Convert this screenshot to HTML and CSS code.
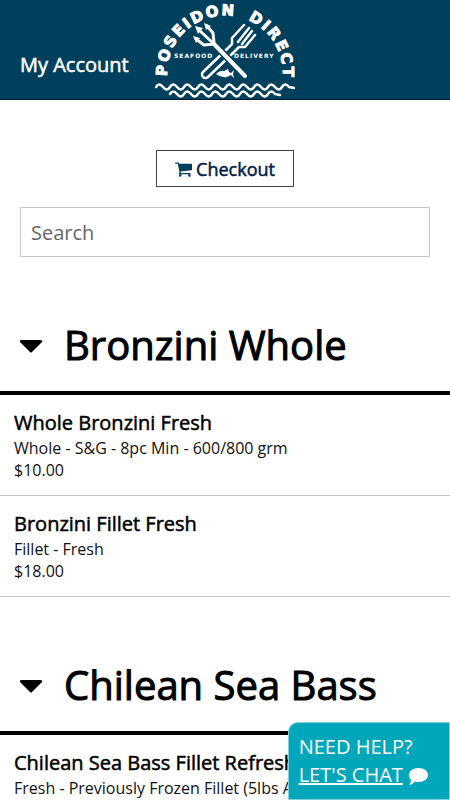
FILE: index.html
```html
<!DOCTYPE html>
<html lang="en">
<head>
  <meta charset="UTF-8" />
  <meta name="viewport" content="width=device-width, initial-scale=1" />
  <title>Poseidon Direct Seafood Delivery</title>
  <link rel="stylesheet" href="styles.css">
</head>
<body>
  <header class="header">
    <a class="account-link" href="#">My Account</a>
    <a class="logo" href="#" aria-label="Poseidon Direct home">
      <svg viewBox="155 0 140 99" width="140" height="99">
        <defs>
          <path id="arc-left" d="M167 76 V74 A58 58 0 0 1 242 18" />
          <path id="arc-right" d="M248 20 A58 58 0 0 1 283 74 V84" />
        </defs>
        <text class="logo-name"><textPath href="#arc-left">POSEIDON</textPath></text>
        <text class="logo-name"><textPath href="#arc-right">DIRECT</textPath></text>
        <text class="logo-tag" x="174" y="58">SEAFOOD</text>
        <text class="logo-tag" x="234" y="58">DELIVERY</text>
        <!-- fork -->
        <g class="logo-line">
          <path d="M226 50 L203 72 A3 3 0 0 0 208 77 L233 53" />
          <path d="M226 50 L232 44 V38 L244 25 M238 42 L249 28 M242 44 L252 31 M233 53 L239 47 H245 L255 35" />
        </g>
        <!-- trident -->
        <path class="logo-cut" d="M216 46 L246 77" />
        <path class="logo-shaft" d="M214 44 L245 76" />
        <path class="logo-prong" d="M199 30 L214 44 M207 26 L213 33 L214 43 M196 39 L204 45 L214 44" />
        <path class="logo-fill" d="M195 26 L203 28 L198 34 Z M204 23 L211 26 L206 30 Z M193 36 L200 38 L196 43 Z" />
        <!-- fish -->
        <path class="logo-fill" d="M216 74 Q220 70 224 71 L228 69 L229 72 L231 73 L234 70 L233 74 L234 78 L231 75 L227 77 Q221 78 216 74 Z" />
        <path class="logo-wave" d="M156 87 q3 -5 7 0 t7 0 t7 0 t7 0 t7 0 t7 0 t7 0 t7 0 t7 0 t7 0 t7 0 t7 0 t7 0 t7 0 t7 0 t7 0 t7 0 t7 0 t7 0 l5 1" />
        <path class="logo-wave" d="M170 94 q3 -5 7 0 t7 0 t7 0 t7 0 t7 0 t7 0 t7 0 t7 0 t7 0 t7 0 t7 0 t7 0 t7 0 t7 0 t7 0 l5 1" />
      </svg>
    </a>
  </header>

  <main>
    <div class="toolbar">
      <button class="checkout" type="button">
        <svg class="cart" viewBox="0 0 1664 1536" width="17" height="16">
          <path d="M640 1408q0 52-38 90t-90 38-90-38-38-90 38-90 90-38 90 38 38 90zm896 0q0 52-38 90t-90 38-90-38-38-90 38-90 90-38 90 38 38 90zm128-1088v512q0 24-16.500 42.500t-40.500 21.500l-1044 122q13 60 13 70 0 16-24 64h920q26 0 45 19t19 45-19 45-45 19h-1024q-26 0-45-19t-19-45q0-11 8-31.500t16-36 21.500-40 15.500-29.500l-177-823h-204q-26 0-45-19t-19-45 19-45 45-19h256q16 0 28.500 6.500t19.500 15.500 13 24.500 8 26 5.500 29.500 4.500 26h1201q26 0 45 19t19 45z" />
        </svg>
        Checkout
      </button>
      <input class="search" type="search" placeholder="Search" aria-label="Search">
    </div>

    <section>
      <h2 class="category">
        <svg class="caret" viewBox="1 -4 24 18" width="24" height="18"><path d="M2 0 H22 Q24 1 23 2 L13 12 Q12 13 11 12 L1 2 Q0 1 2 0 Z" /></svg>
        Bronzini Whole
      </h2>
      <article class="item">
        <h3>Whole Bronzini Fresh</h3>
        <p>Whole - S&amp;G - 8pc Min - 600/800 grm</p>
        <p>$10.00</p>
      </article>
      <article class="item">
        <h3>Bronzini Fillet Fresh</h3>
        <p>Fillet - Fresh</p>
        <p>$18.00</p>
      </article>
    </section>

    <section>
      <h2 class="category">
        <svg class="caret" viewBox="1 -4 24 18" width="24" height="18"><path d="M2 0 H22 Q24 1 23 2 L13 12 Q12 13 11 12 L1 2 Q0 1 2 0 Z" /></svg>
        Chilean Sea Bass
      </h2>
      <article class="item">
        <h3>Chilean Sea Bass Fillet Refreshed</h3>
        <p>Fresh - Previously Frozen Fillet (5lbs Avg)</p>
      </article>
    </section>
  </main>

  <aside class="chat">
    <div>NEED HELP?</div>
    <a href="#">LET'S CHAT</a>
    <svg class="bubble" viewBox="0 0 20 17" width="20" height="17"><path d="M10.500 0 C16 0 20 3 20 7 C20 11 16 14 10.500 14 Q8.500 14 7 13.500 Q4.500 16.500 1 17 Q3 14.500 3 12 Q1 10 1 7 C1 3 5 0 10.500 0 Z" /></svg>
  </aside>
</body>
</html>
```
FILE: styles.css
```css
:root {
  --navy: #00405c;
  --ink: #001c47;
  --teal: #00a6ba;
  --line: #c4c4c4;
}

* {
  box-sizing: border-box;
  margin: 0;
  padding: 0;
}

body {
  font-family: "Open Sans", sans-serif;
  font-size: 16px;
  color: #111;
  background: #fff;
  overflow-x: hidden;
}

.header {
  display: grid;
  grid-template-columns: 1fr auto 1fr;
  background: var(--navy);
  border-bottom: 1px solid #001c30;
}

.account-link {
  align-self: end;
  padding: 0 0 20px 20px;
  font-size: 20px;
  line-height: 28px;
  color: #fff;
  text-decoration: none;
  white-space: nowrap;
  -webkit-text-stroke: 0.5px #fff;
}

.logo svg {
  display: block;
}

.logo-name {
  font-family: "DejaVu Sans", sans-serif;
  font-size: 15px;
  font-weight: 700;
  letter-spacing: 2px;
  fill: #fff;
  stroke: #fff;
  stroke-width: 1;
}

.logo-tag {
  font-family: "DejaVu Sans", sans-serif;
  font-size: 6px;
  font-weight: 700;
  letter-spacing: 1px;
  fill: #fff;
}

.logo-line,
.logo-prong,
.logo-shaft,
.logo-cut,
.logo-wave {
  fill: none;
  stroke: #fff;
  stroke-width: 2.5;
  stroke-linecap: round;
  stroke-linejoin: round;
}

.logo-prong {
  stroke-width: 3;
}

.logo-shaft {
  stroke-width: 4;
}

.logo-cut {
  stroke: var(--navy);
  stroke-width: 7;
}

.logo-fill {
  fill: #fff;
}

.toolbar {
  display: flex;
  flex-direction: column;
  align-items: center;
  gap: 20px;
  padding: 50px 20px 0;
}

.checkout {
  display: flex;
  align-items: center;
  gap: 4px;
  height: 37px;
  padding: 0 18px;
  font-family: inherit;
  font-size: 18px;
  color: var(--ink);
  background: #fff;
  border: 1px solid #3c4358;
  -webkit-text-stroke: 0.5px var(--ink);
}

.cart {
  fill: var(--navy);
}

.search {
  width: 100%;
  height: 50px;
  padding: 0 10px;
  font-family: inherit;
  font-size: 20px;
  border: 1px solid var(--line);
  border-radius: 0;
  outline: none;
  appearance: none;
}

.search::placeholder {
  color: #666;
}

.category {
  display: flex;
  align-items: center;
  gap: 20px;
  padding: 60px 20px 18px;
  font-size: 40px;
  font-weight: 400;
  line-height: 56px;
  color: #000;
  white-space: nowrap;
  border-bottom: 4px solid #000;
  -webkit-text-stroke: 1px #000;
}

.item {
  padding: 14px;
  white-space: nowrap;
  border-bottom: 1px solid var(--line);
}

.item h3 {
  font-size: 20px;
  font-weight: 400;
  line-height: 28px;
  color: #000;
  -webkit-text-stroke: 0.5px #000;
}

.item p {
  line-height: 22px;
}

.chat {
  position: fixed;
  right: 0;
  bottom: 0;
  padding: 10px 21px 10px 10px;
  font-size: 20px;
  line-height: 28px;
  color: #fff;
  background: var(--teal);
  border: 1px solid #7fd2dc;
  border-top-left-radius: 10px;
}

.chat a {
  color: #fff;
}

.bubble {
  fill: #fff;
  vertical-align: middle;
}
```
